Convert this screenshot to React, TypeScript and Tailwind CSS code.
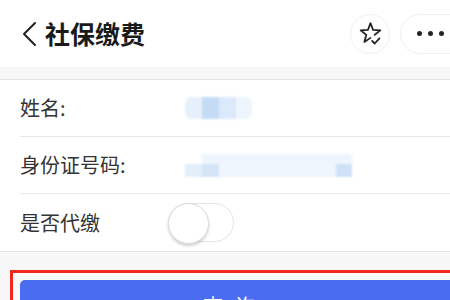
import React from 'react';

const cjk = { fontFamily: '"Noto Sans CJK SC", "Noto Sans", sans-serif' };

const StarCheck = () => (
    <svg width="25" height="25" viewBox="0 0 24 24" fill="none" stroke="#222" strokeWidth="1.7" strokeLinejoin="round" strokeLinecap="round">
        <path d="M16 13.3 L21.5 8.9 L14.5 8.6 L12 2 L9.5 8.6 L2.5 8.9 L8 13.3 L6.1 20.1 L12 16.2" />
        <path d="M13.6 19.2 L16 21.6 L20.6 16.6" />
    </svg>
);

const Row = ({ label, children, last }: { label: string; children?: React.ReactNode; last?: boolean }) => (
    <div className="pl-5">
        <div className={`flex items-center h-[57px] ${last ? '' : 'border-b border-[#e6e6e6]'}`}>
            <span className="w-[165px] text-[20px] text-[#333]" style={cjk}>{label}</span>
            {children}
        </div>
    </div>
);

export default function App() {
    return (
        <div className="w-[450px] h-[300px] overflow-hidden bg-[#f7f7f8]" style={cjk}>
            {/* Header */}
            <div className="h-[67px] bg-white flex items-center">
                <svg width="18" height="26" viewBox="0 0 18 26" className="ml-[20px]" fill="none" stroke="#222" strokeWidth="2" strokeLinecap="round" strokeLinejoin="round">
                    <path d="M15 2 L4 13 L15 24" />
                </svg>
                <span className="ml-[7px] text-[25px] font-semibold text-[#1a1a1a]">社保缴费</span>
                <div className="ml-auto flex items-center gap-[10px] -mr-[20px]">
                    <div className="w-[40px] h-[40px] rounded-full border border-[#f0f0f0] flex items-center justify-center">
                        <StarCheck />
                    </div>
                    <div className="w-[70px] h-[40px] rounded-full border border-[#f0f0f0] flex items-center pl-[16px] gap-[6px]">
                        <span className="w-[5px] h-[5px] rounded-full bg-[#222]" />
                        <span className="w-[5px] h-[5px] rounded-full bg-[#222]" />
                        <span className="w-[5px] h-[5px] rounded-full bg-[#222]" />
                    </div>
                </div>
            </div>
            <div className="h-[13px] border-b border-[#e3e3e3]" />

            {/* Form */}
            <div className="bg-white border-b border-[#e3e3e3]">
                <Row label="姓名:">
                    <div className="flex h-[22px] rounded-[6px] overflow-hidden blur-[1px]">
                        <div className="w-[17px] bg-[#e6f0fb]" />
                        <div className="w-[17px] bg-[#c4dbf5]" />
                        <div className="w-[17px] bg-[#dbe9fa]" />
                        <div className="w-[16px] bg-[#eef5fd]" />
                    </div>
                </Row>
                <Row label="身份证号码:">
                    <div className="flex flex-col w-[167px] h-[23px] blur-[1px]">
                        <div className="h-[10px] ml-[17px] bg-[#eef5fd]" />
                        <div className="flex h-[13px]">
                            <div className="w-[17px] bg-[#e3eefb]" />
                            <div className="w-[17px] bg-[#d4e5f8]" />
                            <div className="flex-1 bg-[#f0f6fd]" />
                            <div className="w-[16px] bg-[#cfe1f6]" />
                        </div>
                    </div>
                </Row>
                <Row label="是否代缴" last>
                    <div className="-ml-[17px] relative w-[66px] h-[39px] rounded-full border border-[#e4e4e4] bg-white">
                        <div className="absolute -left-px -top-px w-[41px] h-[41px] rounded-full bg-white border border-[#dcdcdc] shadow-[0_2px_3px_rgba(0,0,0,0.18)]" />
                    </div>
                </Row>
            </div>

            {/* Submit */}
            <div className="pt-[18px] pl-[10px]">
                <div className="border-[3px] border-[#f0281e] border-r-0 pt-[7px] pl-[7px] bg-[#fafafc]">
                    <button className="w-full h-[48px] rounded-l-[5px] bg-[#4a6cf0] text-white text-[20px] tracking-[12px] pt-[4px]" style={cjk}>
                        查询
                    </button>
                </div>
            </div>
        </div>
    );
}
